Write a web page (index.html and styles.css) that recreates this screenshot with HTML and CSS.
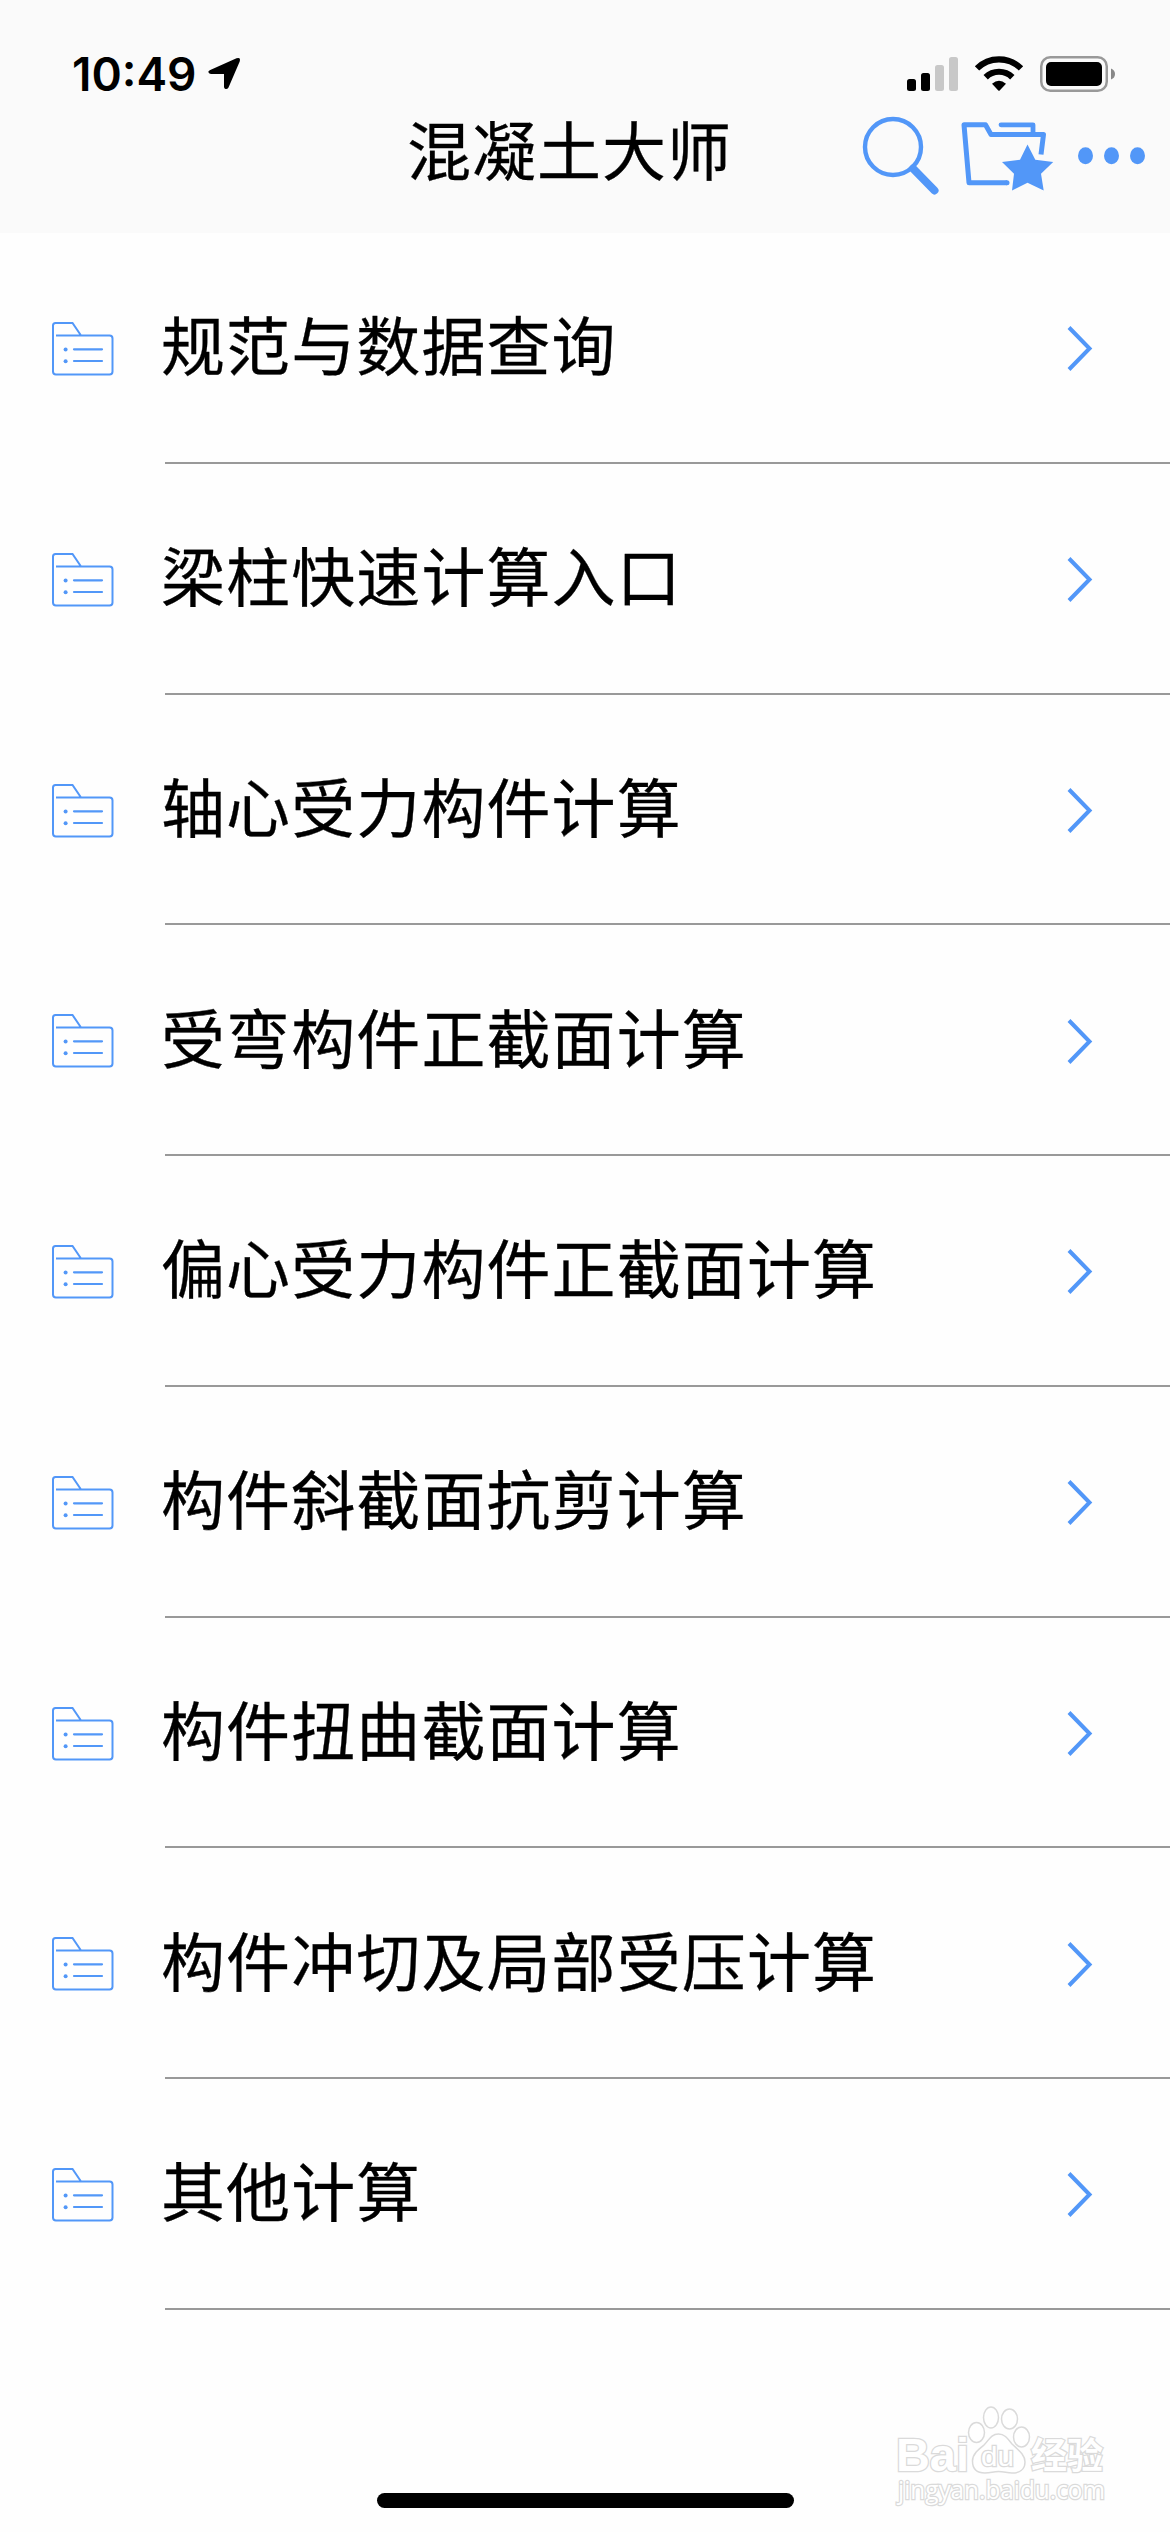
FILE: index.html
```html
<!DOCTYPE html>
<html lang="zh-CN">
<head>
<meta charset="utf-8">
<title>混凝土大师</title>
<link rel="stylesheet" href="styles.css">
</head>
<body>
<svg class="defs" aria-hidden="true">
  <symbol id="folder" viewBox="48 318 70 62">
    <path d="M53 335.500V325.500Q53 323 55.500 323H72.500L81 335.500M56 335.500H109.500Q112.500 335.500 112.500 338.500V371.500Q112.500 374.500 109.500 374.500H56Q53 374.500 53 371.500V335.500" fill="none" stroke="currentColor" stroke-width="2"/>
    <path d="M74 349.300H102M74 361H102" fill="none" stroke="currentColor" stroke-width="2.200" stroke-linecap="round"/>
    <circle cx="65.600" cy="349.500" r="2"/><circle cx="65.600" cy="361.200" r="2"/>
  </symbol>
  <symbol id="chevron" viewBox="1062 322 36 53">
    <path d="M1069 327.500L1089.500 348.500L1069 369.500" fill="none" stroke="currentColor" stroke-width="4"/>
  </symbol>
</svg>
<div class="screen">
  <header class="header">
    <div class="status">
      <span class="time">10:49</span>
      <svg class="arrow" viewBox="206 56 36 36"><path d="M210.800 69.700L236.500 58.300Q241 57 239.700 61.500L228.500 87.500Q227 89.800 225 88.800Q224 88.300 224 86.500V74H211Q208.300 73.500 208.300 71.800Q208.500 70.600 210.800 69.700Z"/></svg>
      <svg class="status-icons" viewBox="900 50 220 46">
        <rect x="907" y="79" width="9" height="12" rx="2.500"/>
        <rect x="921" y="73" width="9" height="18" rx="2.500"/>
        <rect x="935" y="65" width="9" height="26" rx="2.500" fill="#c8c8c8"/>
        <rect x="949" y="57" width="9" height="34" rx="2.500" fill="#c8c8c8"/>
        <g fill="none" stroke="#000">
          <path d="M977 68.400A31.200 31.200 0 0 1 1021 68.400" stroke-width="6.200"/>
          <path d="M985.700 77.200A19 19 0 0 1 1012.300 77.200" stroke-width="6.200"/>
        </g>
        <path d="M992 83.800Q999 77.700 1006 83.800L999.700 90.500Q999 91.200 998.300 90.500Z"/>
        <rect x="1041.250" y="57.250" width="65.500" height="33.500" rx="9" fill="none" stroke="#999" stroke-width="2.500"/>
        <rect x="1046" y="62" width="56" height="24" rx="5"/>
        <path d="M1111 68.500Q1115 70 1115 74T1111 79.500Z" fill="#888"/>
      </svg>
    </div>
    <div class="nav">
      <h1 class="title">混凝土大师</h1>
      <svg class="search" viewBox="858 96 90 110">
        <circle cx="893" cy="147" r="28" fill="none" stroke="currentColor" stroke-width="4.400"/>
        <path d="M913 168.500L934.500 190.500" stroke="currentColor" stroke-width="8" stroke-linecap="round"/>
      </svg>
      <svg class="favorites" viewBox="948 96 118 110">
        <path d="M1007 182.700H969L964 124.800H985.500L991 134.500H1043.500L1041 154.500" fill="none" stroke="currentColor" stroke-width="5" stroke-linejoin="round"/>
        <path d="M1001 124.800H1033V134" fill="none" stroke="currentColor" stroke-width="4.800" stroke-linejoin="round" stroke-linecap="round"/>
        <circle cx="1007" cy="182.700" r="2.500"/>
        <path d="M1027.500 144.500L1035.300 159.700L1053.200 162L1041 173.700L1043.700 190.500L1027.500 182.700L1012 190.500L1014 173.700L1002 162L1020 159.700Z"/>
      </svg>
      <svg class="more" viewBox="1066 96 104 110">
        <ellipse cx="1085.500" cy="155.700" rx="7.500" ry="8.500"/><ellipse cx="1111.500" cy="155.700" rx="7.500" ry="8.500"/><ellipse cx="1137.500" cy="155.700" rx="7.500" ry="8.500"/>
      </svg>
    </div>
  </header>
  <ul class="list">
    <li class="row"><svg class="folder"><use href="#folder"/></svg><div class="cell"><span>规范与数据查询</span><svg class="chevron"><use href="#chevron"/></svg></div></li>
    <li class="row"><svg class="folder"><use href="#folder"/></svg><div class="cell"><span>梁柱快速计算入口</span><svg class="chevron"><use href="#chevron"/></svg></div></li>
    <li class="row"><svg class="folder"><use href="#folder"/></svg><div class="cell"><span>轴心受力构件计算</span><svg class="chevron"><use href="#chevron"/></svg></div></li>
    <li class="row"><svg class="folder"><use href="#folder"/></svg><div class="cell"><span>受弯构件正截面计算</span><svg class="chevron"><use href="#chevron"/></svg></div></li>
    <li class="row"><svg class="folder"><use href="#folder"/></svg><div class="cell"><span>偏心受力构件正截面计算</span><svg class="chevron"><use href="#chevron"/></svg></div></li>
    <li class="row"><svg class="folder"><use href="#folder"/></svg><div class="cell"><span>构件斜截面抗剪计算</span><svg class="chevron"><use href="#chevron"/></svg></div></li>
    <li class="row"><svg class="folder"><use href="#folder"/></svg><div class="cell"><span>构件扭曲截面计算</span><svg class="chevron"><use href="#chevron"/></svg></div></li>
    <li class="row"><svg class="folder"><use href="#folder"/></svg><div class="cell"><span>构件冲切及局部受压计算</span><svg class="chevron"><use href="#chevron"/></svg></div></li>
    <li class="row"><svg class="folder"><use href="#folder"/></svg><div class="cell"><span>其他计算</span><svg class="chevron"><use href="#chevron"/></svg></div></li>
  </ul>
  <div class="home-indicator"></div>
  <svg class="watermark" viewBox="890 2400 220 110">
    <ellipse cx="976.500" cy="2432.500" rx="8" ry="10"/>
    <ellipse cx="991" cy="2417.500" rx="7.500" ry="10.500"/>
    <ellipse cx="1009.500" cy="2419" rx="8" ry="10"/>
    <ellipse cx="1021.500" cy="2437" rx="8" ry="10"/>
    <path d="M998.500 2434C1005 2434 1008 2439 1012 2444C1017 2449 1025 2454 1025 2462C1025 2470 1019 2473 1012 2473C1007 2473 1004 2471.500 998.500 2471.500C993 2471.500 991 2473 985 2473C977 2473 972.500 2469 972.500 2461C972.500 2454 979 2449 984 2445C989 2440 991 2434 998.500 2434Z"/>
    <text class="brand" x="896" y="2471" textLength="73" lengthAdjust="spacingAndGlyphs">Bai</text>
    <text class="du" x="981" y="2466" textLength="33" lengthAdjust="spacingAndGlyphs">du</text>
    <text class="cn" x="1031" y="2469" textLength="72" lengthAdjust="spacingAndGlyphs">经验</text>
    <text class="site" x="898" y="2499" textLength="207" lengthAdjust="spacingAndGlyphs">jingyan.baidu.com</text>
  </svg>
</div>
</body>
</html>
```
FILE: styles.css
```css
* { box-sizing: border-box; }
body { margin: 0; background: #fefefe; color: #000; font-family: "Noto Sans CJK SC", sans-serif; }
svg { display: block; flex: none; }
.defs { position: absolute; width: 0; height: 0; }
.screen { position: relative; width: 1170px; height: 2532px; display: flex; flex-direction: column; overflow: hidden; }
.header { height: 233px; flex: none; background: #fafafa; }
.status { height: 96px; display: flex; align-items: flex-end; padding: 0 50px 0 72px; }
.time { width: 134px; height: 45px; font: 600 46px/46px Inter, sans-serif; letter-spacing: 0; white-space: nowrap; }
.arrow { width: 36px; height: 36px; margin-bottom: 4px; }
.status-icons { width: 220px; height: 46px; margin-left: auto; }
.nav { height: 110px; display: flex; align-items: center; color: #5297f8; fill: #5297f8; }
.title { margin: 0 126px 8px 407px; width: 325px; font-size: 64px; line-height: 102px; letter-spacing: 1px; font-weight: 400; -webkit-text-stroke: 0.3px #000; color: #000; white-space: nowrap; }
.search { width: 90px; height: 110px; }
.favorites { width: 118px; height: 110px; }
.more { width: 104px; height: 110px; }
.list { list-style: none; margin: 0; padding: 0; flex: 1; }
.row { display: flex; height: 230.75px; padding-left: 48px; align-items: stretch; }
.folder { width: 70px; height: 62px; margin: 85px 47px 0 0; color: #5297f8; fill: #5297f8; }
.cell { flex: 1; display: flex; align-items: center; justify-content: space-between; padding: 0 72px 0 0; border-bottom: 2px solid #999; }
.cell span { margin: 0 0 10px -4px; font-size: 64px; line-height: 96px; letter-spacing: 1.1px; -webkit-text-stroke: 0.3px #000; white-space: nowrap; }
.chevron { width: 36px; height: 53px; margin-top: 3px; color: #5297f8; }
.home-indicator { width: 417px; height: 15px; margin: 0 auto 24px; border-radius: 8px; background: #000; flex: none; }
.watermark { position: absolute; left: 890px; top: 2400px; width: 220px; height: 110px; fill: #fff; stroke: #dadada; stroke-width: 1.5px; }
.watermark text { paint-order: stroke; stroke-width: 2.5px; }
.brand { font: 700 46px "Liberation Sans", sans-serif; }
.du { font: 400 28px "Liberation Sans", sans-serif; }
.cn { font: 700 36px "Noto Sans CJK SC", sans-serif; }
.site { font: 400 25px "Open Sans", sans-serif; }
```
